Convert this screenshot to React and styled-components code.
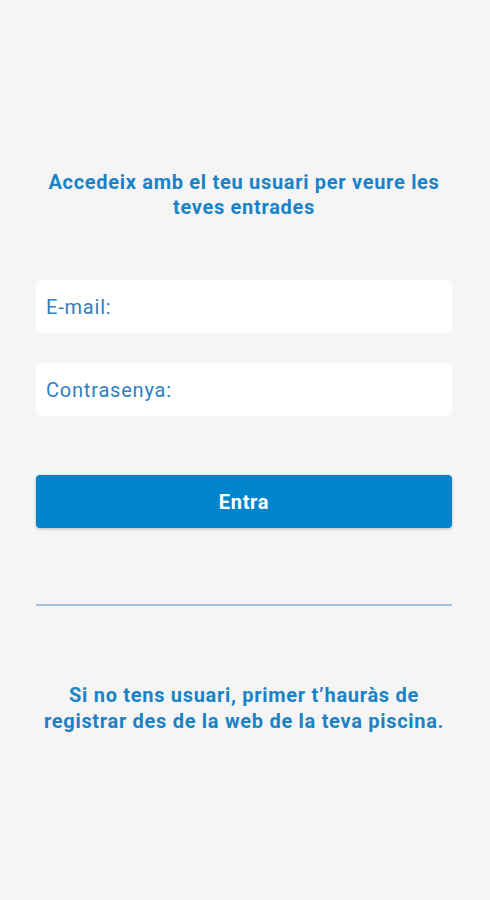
import styled, { createGlobalStyle } from "styled-components";

const GlobalStyle = createGlobalStyle`
  html, body {
    margin: 0;
    padding: 0;
    background: #f5f5f5;
  }
  body {
    font-family: Roboto, "Liberation Sans", sans-serif;
  }
`;

const Screen = styled.div`
  min-height: 900px;
  background: #f5f5f5;
  display: flex;
  flex-direction: column;
  padding: 170px 38px 0 36px;
  box-sizing: border-box;
`;

const Heading = styled.p`
  margin: 0;
  text-align: center;
  font-size: 20px;
  line-height: 25px;
  font-weight: 700;
  letter-spacing: 0.7px;
  color: #1a82c6;
`;

const Form = styled.div`
  display: flex;
  flex-direction: column;
  gap: 30px;
  margin-top: 60px;
`;

const Field = styled.input`
  height: 53px;
  border: none;
  border-radius: 5px;
  background: #ffffff;
  padding: 0 10px;
  font-family: Roboto, "Liberation Sans", sans-serif;
  font-size: 20px;
  letter-spacing: 0.8px;
  color: #2a7fc0;
  outline: none;
  box-sizing: border-box;
  &::placeholder {
    color: #2f80c0;
    opacity: 1;
  }
`;

const Button = styled.button`
  margin-top: 59px;
  height: 53px;
  border: none;
  border-radius: 4px;
  background: #0085cc;
  color: #ffffff;
  font-family: Roboto, "Liberation Sans", sans-serif;
  font-size: 20px;
  font-weight: 700;
  letter-spacing: 0.7px;
  box-shadow: 0 1px 3px rgba(0, 0, 0, 0.25);
  cursor: pointer;
`;

const Divider = styled.hr`
  margin: 76px 0 0;
  border: none;
  height: 2px;
  background: #a9bfe8;
`;

const Footer = styled(Heading)`
  margin-top: 76px;
  line-height: 26px;
`;

export default function App() {
  return (
    <>
      <GlobalStyle />
      <Screen>
        <Heading>Accedeix amb el teu usuari per veure les teves entrades</Heading>
        <Form>
          <Field type="email" placeholder="E-mail:" />
          <Field type="password" placeholder="Contrasenya:" />
        </Form>
        <Button>Entra</Button>
        <Divider />
        <Footer>
          Si no tens usuari, primer t’hauràs de registrar des de la web de la teva piscina.
        </Footer>
      </Screen>
    </>
  );
}
